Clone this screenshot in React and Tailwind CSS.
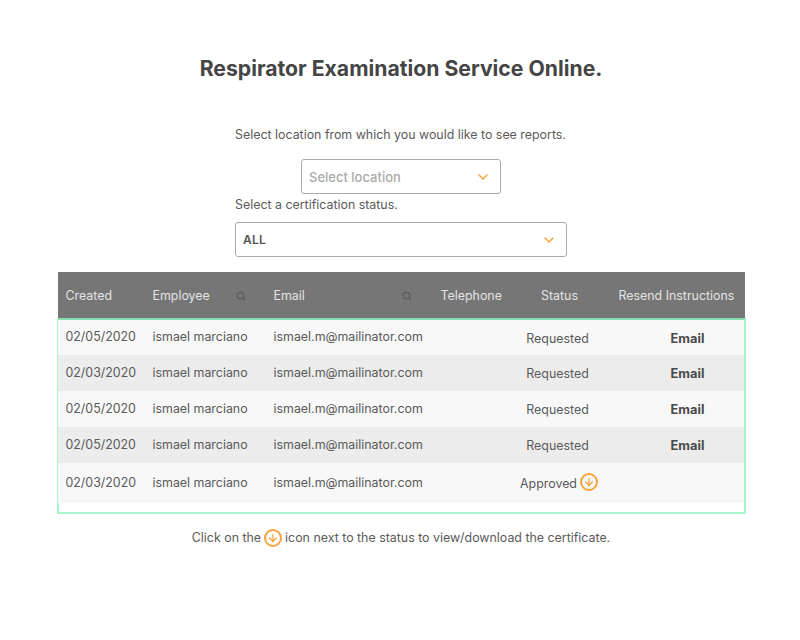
import React from 'react';
import { ChevronDown, Search, ArrowDown } from 'lucide-react';

const rows = [
  { created: '02/05/2020', status: 'Requested', bg: 'bg-[#f8f8f8]', h: 'h-[35px]', pad: '' },
  { created: '02/03/2020', status: 'Requested', bg: 'bg-[#ececec]', h: 'h-[36px]', pad: '' },
  { created: '02/05/2020', status: 'Requested', bg: 'bg-[#f8f8f8]', h: 'h-[36px]', pad: '' },
  { created: '02/05/2020', status: 'Requested', bg: 'bg-[#ececec]', h: 'h-[36px]', pad: '' },
  { created: '02/03/2020', status: 'Approved', bg: 'bg-[#f8f8f8]', h: 'h-[40px]', pad: '' },
];

const gridCols = 'grid grid-cols-[95px_121px_167px_78px_78px_148px]';

const DownloadIcon = ({ className }) => (
  <span className={`inline-flex items-center justify-center rounded-full border-2 border-[#f7a23b] size-[18px] ${className}`}>
    <ArrowDown size={12} strokeWidth={2.5} className="text-[#f7a23b]" />
  </span>
);

const SelectBox = ({ label, width, labelClass }) => (
  <div className={`flex items-center justify-between h-[35px] pl-[7px] pr-[9px] bg-white border border-[#a9a9a9] rounded-[3px] ${width}`}>
    <span className={labelClass}>{label}</span>
    <ChevronDown size={16} strokeWidth={2.25} className="text-[#f7a23b]" />
  </div>
);

export default function App() {
  return (
    <div className="w-[800px] h-[640px] pl-[2px] bg-white flex flex-col items-center overflow-hidden text-[#5a5a5a] font-['Inter','Liberation_Sans',sans-serif]">
      <h1 className="mt-[53px] text-[21.2px] leading-[30px] font-bold text-[#454545]">
        Respirator Examination Service Online.
      </h1>

      <p className="mt-[44px] text-[12.4px] leading-4 w-[332px] whitespace-nowrap">
        Select location from which you would like to see reports.
      </p>
      <div className="mt-[16px]">
        <SelectBox label="Select location" width="w-[200px]" labelClass="pt-[2px] text-[13px] text-[#aaa] font-medium" />
      </div>
      <p className="mt-[3px] text-[12.4px] leading-4 w-[332px]">Select a certification status.</p>
      <div className="mt-[9px]">
        <SelectBox label="ALL" width="w-[332px]" labelClass="text-[12px] text-[#555] font-semibold tracking-wide" />
      </div>

      <div className="mt-[15px] w-[689px]">
        <div className={`${gridCols} mx-px h-[46px] pt-[2px] items-center bg-[#767676] text-[12.4px] text-[#e4e4e4]`}>
          <span className="pl-2">Created</span>
          <span className="flex items-center justify-between pl-0 pr-[28px]">
            Employee <Search size={10} strokeWidth={3} className="text-[#5c5c5c]" />
          </span>
          <span className="flex items-center justify-between pr-[29px]">
            Email <Search size={10} strokeWidth={3} className="text-[#5c5c5c]" />
          </span>
          <span>Telephone</span>
          <span className="text-center pl-1">Status</span>
          <span className="pl-[22px]">Resend Instructions</span>
        </div>
        <div className="border-2 border-[#a8f7cc] border-t-[#86e0b4] h-[196px] bg-white">
          {rows.map((row, i) => (
            <div key={i} className={`${gridCols} -ml-px items-center text-[12.4px] ${row.bg} ${row.h} ${row.pad}`}>
              <span className="pl-2">{row.created}</span>
              <span>ismael marciano</span>
              <span>ismael.m@mailinator.com</span>
              <span></span>
              {row.status === 'Approved' ? (
                <span className="flex items-center justify-center gap-[3px] whitespace-nowrap pl-[3px]">
                  <span className="pt-[2px]">Approved</span> <DownloadIcon className="-mt-[1px] shrink-0" />
                </span>
              ) : (
                <span className="text-center pt-[3px]">{row.status}</span>
              )}
              <span className="text-center pt-[2px] pl-[34px] text-[12.8px] font-bold text-[#4a4a4a]">
                {row.status === 'Requested' ? 'Email' : ''}
              </span>
            </div>
          ))}
        </div>
      </div>

      <p className="mt-[15px] flex items-center gap-[3px] text-[12.4px] leading-[18px]">
        Click on the <DownloadIcon /> icon next to the status to view/download the certificate.
      </p>
    </div>
  );
}
